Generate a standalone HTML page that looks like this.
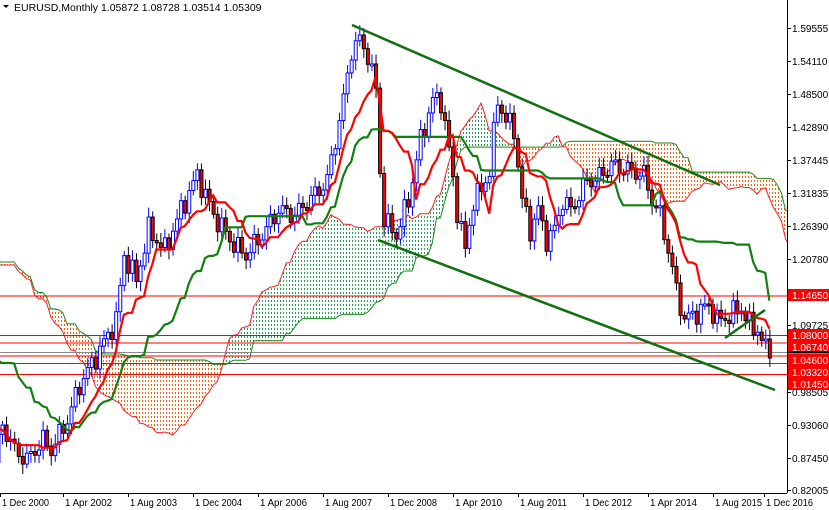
<!DOCTYPE html>
<html><head><meta charset="utf-8"><style>
html,body{margin:0;padding:0;background:#fff;width:829px;height:510px;overflow:hidden}
svg{display:block;font-family:"Liberation Sans",sans-serif;font-size:10px}
</style></head><body>
<svg id="c" width="829" height="510" xmlns="http://www.w3.org/2000/svg">
<defs>
<pattern id="po" width="3" height="4" patternUnits="userSpaceOnUse"><rect x="1" y="0" width="1" height="2" fill="#ff5a00"/></pattern>
<pattern id="pg" width="3" height="4" patternUnits="userSpaceOnUse"><rect x="1" y="0" width="1" height="2" fill="#1aa050"/></pattern>
<clipPath id="cl"><rect x="0" y="0" width="787" height="493"/></clipPath>
</defs>
<g id="plot" clip-path="url(#cl)"></g>
<g id="over"></g>
<line x1="787.5" y1="0" x2="787.5" y2="493" stroke="#000"/>
<line x1="0" y1="493.5" x2="787" y2="493.5" stroke="#000"/>
<text x="14" y="11" font-size="10.5">EURUSD,Monthly  1.05872 1.08728 1.03514 1.05309</text>
<path d="M3 5 L9 5 L6 8 Z" fill="#000"/>
</svg>
<script>
var NS="http://www.w3.org/2000/svg";
function el(p,t,a,txt){var e=document.createElementNS(NS,t);for(var k in a)e.setAttribute(k,a[k]);if(txt!=null)e.textContent=txt;p.appendChild(e);return e;}
var plot=document.getElementById('plot'),over=document.getElementById('over');
var kp=[[-80,265],[-60,250],[-40,260],[-30,270],[-24,262],[-18,330],[-12,380],[-6,420],[-2,460],[0,425],[3,450],[6,460],[10,440],[12,450],[16,420],[19,385],[24,350],[28,320],[30,255],[33,280],[36,230],[40,250],[44,210],[48,175],[52,215],[57,245],[60,255],[64,235],[68,210],[72,215],[78,190],[80,180],[82,140],[84,100],[86,50],[88,40],[90,55],[92,90],[93,170],[94,220],[97,235],[100,200],[103,140],[106,100],[108,100],[110,150],[112,210],[114,250],[116,200],[118,190],[120,170],[122,100],[124,120],[126,130],[128,200],[130,230],[132,210],[134,240],[136,230],[138,200],[140,210],[142,195],[144,180],[146,180],[150,165],[154,170],[158,175],[160,200],[162,215],[164,250],[166,290],[168,320],[170,315],[174,305],[176,320],[178,318],[182,308],[184,325],[186,330],[188,350],[189,358]];
function interp(m){for(var i=0;i<kp.length-1;i++){if(m>=kp[i][0]&&m<=kp[i+1][0]){var t=(m-kp[i][0])/(kp[i+1][0]-kp[i][0]);return kp[i][1]+t*(kp[i+1][1]-kp[i][1]);}}return kp[kp.length-1][1];}
var X=function(m){return 2+m*4.06;};
var LAST=189;
var bars=[],prev=interp(-80);
for(var m=-80;m<=LAST;m++){var c=interp(m)+8*Math.sin(m*1.7)+5*Math.sin(m*3.1);if(m==LAST)c=358;var o=prev;var ext1=4+6*Math.abs(Math.sin(m*2.3)),ext2=4+6*Math.abs(Math.cos(m*1.3));bars.push({m:m,o:o,c:c,h:Math.min(o,c)-ext1,l:Math.max(o,c)+ext2});prev=c;}
function mid(i,n){var hi=1e9,lo=-1e9;for(var j=Math.max(0,i-n+1);j<=i;j++){hi=Math.min(hi,bars[j].h);lo=Math.max(lo,bars[j].l);}return (hi+lo)/2;}
var ten=[],kij=[],sa={},sb={};
bars.forEach(function(b,i){ten.push(mid(i,9));kij.push(mid(i,26));sa[b.m+26]=(ten[i]+kij[i])/2;sb[b.m+26]=mid(i,52);});
for(var m=-3;m<=LAST+26;m++){if(sa[m]==null||sa[m+1]==null)continue;var a0=sa[m],a1=sa[m+1],b0=sb[m],b1=sb[m+1];var up=(a0+a1)<(b0+b1);
el(plot,'polygon',{points:X(m)+','+a0+' '+X(m+1)+','+a1+' '+X(m+1)+','+b1+' '+X(m)+','+b0,fill:up?'url(#pg)':'url(#po)'});}
var pa='',pb='';for(var m=-3;m<=LAST+26;m++){if(sa[m]==null)continue;pa+=(pa?'L':'M')+X(m)+' '+sa[m].toFixed(1);pb+=(pb?'L':'M')+X(m)+' '+sb[m].toFixed(1);}
el(plot,'path',{d:pb,fill:'none',stroke:'#1a8a1a','stroke-width':1});
el(plot,'path',{d:pa,fill:'none',stroke:'#ff2020','stroke-width':1});
[[295.5,'#f00'],[335,'#f00'],[342.5,'#f00'],[352,'#888'],[355.5,'#f00'],[363,'#f00'],[374,'#f00']].forEach(function(l){el(plot,'line',{x1:0,x2:787,y1:l[0]+0.5,y2:l[0]+0.5,stroke:l[1]});});
bars.forEach(function(b){var x=X(b.m);if(x<-5)return;var bull=b.c<b.o;var col=bull?'#0000ff':'#000';
el(plot,'line',{x1:x+.5,x2:x+.5,y1:b.h,y2:b.l,stroke:col});
var t=Math.min(b.o,b.c),h=Math.max(2,Math.abs(b.o-b.c));
el(plot,'rect',{x:x-1,y:t,width:3,height:h,fill:bull?'#fff':'#f00',stroke:col,'stroke-width':1});});
var pt='',pk='';bars.forEach(function(b,i){pt+=(pt?'L':'M')+X(b.m)+' '+ten[i].toFixed(1);pk+=(pk?'L':'M')+X(b.m)+' '+kij[i].toFixed(1);});
el(plot,'path',{d:pk,fill:'none',stroke:'#108010','stroke-width':2.2});
el(plot,'path',{d:pt,fill:'none',stroke:'#ff0000','stroke-width':2.2});
[[352,25,720,185],[378,240,775,390],[725,338,765,310]].forEach(function(l){el(plot,'line',{x1:l[0],y1:l[1],x2:l[2],y2:l[3],stroke:'#107010','stroke-width':2.5});});
[[28,'1.59555'],[61,'1.54110'],[94,'1.48500'],[127,'1.42890'],[160,'1.37445'],[193,'1.31835'],[226,'1.26390'],[259,'1.20780'],[325,'1.09725'],[392,'0.98505'],[425,'0.93060'],[458,'0.87450'],[490,'0.82005']].forEach(function(p){el(over,'line',{x1:787,x2:791,y1:p[0]+.5,y2:p[0]+.5,stroke:'#000'});el(over,'text',{x:792,y:p[0]+4},p[1]);});
[[289,'1.14650'],[329,'1.08000'],[341,'1.06740'],[354,'1.04600'],[366,'1.03320'],[378,'1.01450']].forEach(function(p){el(over,'rect',{x:788,y:p[0],width:41,height:12,fill:'#f00'});el(over,'text',{x:792,y:p[0]+10,fill:'#fff'},p[1]);});
el(over,'line',{x1:788,x2:829,y1:352.5,y2:352.5,stroke:'#000','stroke-width':2});
[[3,'1 Dec 2000'],[66,'1 Apr 2002'],[131,'1 Aug 2003'],[196,'1 Dec 2004'],[261,'1 Apr 2006'],[326,'1 Aug 2007'],[391,'1 Dec 2008'],[456,'1 Apr 2010'],[521,'1 Aug 2011'],[586,'1 Dec 2012'],[651,'1 Apr 2014'],[716,'1 Aug 2015'],[767,'1 Dec 2016']].forEach(function(p){el(over,'line',{x1:p[0]-2.5,x2:p[0]-2.5,y1:493,y2:497,stroke:'#000'});el(over,'text',{x:p[0]-1,y:506,textLength:47,lengthAdjust:'spacingAndGlyphs'},p[1]);});
</script>
</body></html>
